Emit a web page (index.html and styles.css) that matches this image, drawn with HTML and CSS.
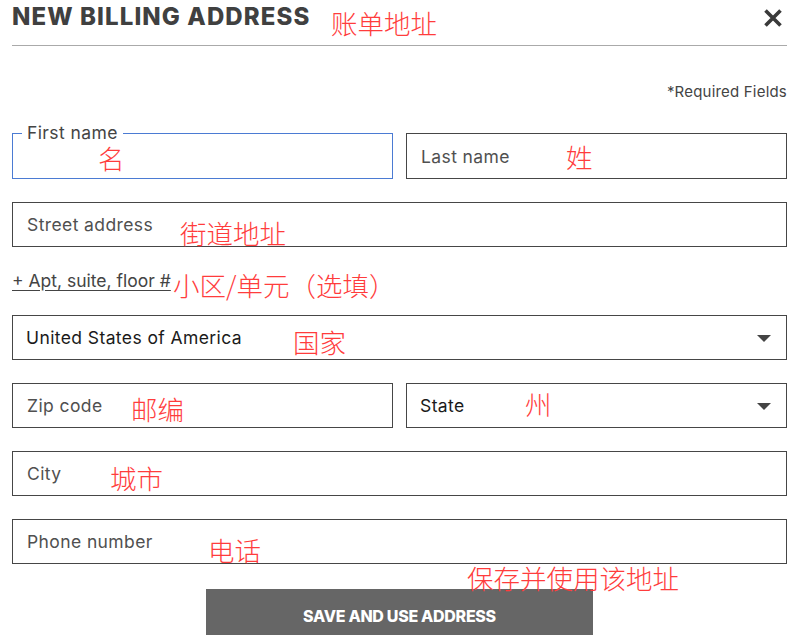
FILE: index.html
```html
<!DOCTYPE html>
<html lang="en">
<head>
    <meta charset="UTF-8">
    <meta name="viewport" content="width=device-width, initial-scale=1.0">
    <title>New Billing Address</title>
    <link rel="stylesheet" href="styles.css">
</head>
<body>
    <div class="page">
        <div class="header">
            <h1>NEW BILLING ADDRESS</h1>
            <button class="close-btn" aria-label="Close">
                <svg width="20" height="20" viewBox="0 0 20 20">
                    <path d="M2.5 2.5 L17.5 17.5 M17.5 2.5 L2.5 17.5" stroke="#3a3a3a" stroke-width="3.6" stroke-linecap="butt"/>
                </svg>
            </button>
        </div>

        <div class="required">*Required Fields</div>

        <form class="address-form">
            <div class="row two first">
                <div class="field active">
                    <span class="float-label">First name</span>
                </div>
                <div class="field"><span class="placeholder">Last name</span></div>
            </div>

            <div class="row">
                <div class="field"><span class="placeholder">Street address</span></div>
            </div>

            <a href="#" class="apt-link">+ Apt, suite, floor #</a>

            <div class="row">
                <div class="field select"><span class="value">United States of America</span><span class="caret"></span></div>
            </div>

            <div class="row two">
                <div class="field"><span class="placeholder">Zip code</span></div>
                <div class="field select"><span class="value">State</span><span class="caret"></span></div>
            </div>

            <div class="row">
                <div class="field"><span class="placeholder">City</span></div>
            </div>

            <div class="row">
                <div class="field"><span class="placeholder">Phone number</span></div>
            </div>

            <div class="actions">
                <button type="button" class="save-btn">SAVE AND USE ADDRESS</button>
            </div>
        </form>

        <!-- red notes drawn over the screenshot -->
        <span class="note" style="left:331px; top:8px;">账单地址</span>
        <span class="note" style="left:98px; top:143px;">名</span>
        <span class="note" style="left:566px; top:142px;">姓</span>
        <span class="note" style="left:180px; top:218px;">街道地址</span>
        <span class="note" style="left:173px; top:270px;">小区/单元（选填）</span>
        <span class="note" style="left:293px; top:327px;">国家</span>
        <span class="note" style="left:131px; top:394px;">邮编</span>
        <span class="note" style="left:525px; top:389px;">州</span>
        <span class="note" style="left:110px; top:463px;">城市</span>
        <span class="note" style="left:208px; top:535px;">电话</span>
        <span class="note" style="left:467px; top:563px;">保存并使用该地址</span>
    </div>
</body>
</html>
```

FILE: styles.css
```css
* {
    margin: 0;
    padding: 0;
    box-sizing: border-box;
}

body {
    background: #fff;
    font-family: "Inter", "Noto Sans", sans-serif;
    color: #444;
    overflow: hidden;
}

.page {
    position: relative;
    width: 789px;
    padding: 0 2px 0 12px;
}

.header {
    height: 46px;
    border-bottom: 1px solid #aaa;
    display: flex;
    justify-content: space-between;
    align-items: flex-start;
    padding-top: 3px;
}

h1 {
    font-size: 24px;
    font-weight: 800;
    letter-spacing: 1.1px;
    color: #404040;
    line-height: 28px;
}

.close-btn {
    background: none;
    border: none;
    margin: 5px 4px 0 0;
    cursor: pointer;
}

.required {
    text-align: right;
    font-size: 15px;
    letter-spacing: 0.2px;
    line-height: 20px;
    padding-top: 36px;
    color: #444;
}

.address-form {
    margin-top: 31px;
    display: flex;
    flex-direction: column;
    gap: 23px;
}

.row {
    display: flex;
    gap: 13px;
}

.field {
    position: relative;
    flex: 1;
    height: 45px;
    border: 1px solid #464646;
    display: flex;
    align-items: center;
    padding: 0 14px;
    font-size: 17.5px;
    letter-spacing: 0.4px;
}

.row.first .field {
    height: 46px;
}

.field.active {
    border-color: #4b7bd3;
}

.float-label {
    position: absolute;
    left: 9px;
    top: -12px;
    background: #fff;
    padding: 0 5px;
    line-height: 22px;
    color: #444;
}

.placeholder {
    color: #505050;
}

.select .value {
    color: #1a1a1a;
    margin-left: -1px;
}

.caret {
    position: absolute;
    right: 15px;
    top: 19px;
    border-left: 7px solid transparent;
    border-right: 7px solid transparent;
    border-top: 7px solid #444;
}

.apt-link {
    font-size: 17.5px;
    line-height: 22px;
    color: #444;
    text-decoration: underline;
    text-underline-offset: 3px;
    align-self: flex-start;
}

.actions {
    display: flex;
    justify-content: center;
    margin-top: 2px;
}

.save-btn {
    width: 387px;
    height: 52px;
    background: #666;
    color: #fff;
    border: none;
    font-family: "Inter", sans-serif;
    font-size: 16px;
    font-weight: 800;
    letter-spacing: -0.3px;
    padding-top: 2px;
}

.note {
    position: absolute;
    font-family: "Noto Sans CJK SC", sans-serif;
    font-weight: 300;
    font-size: 26.5px;
    line-height: 30px;
    color: #ff3c3c;
    white-space: nowrap;
}
```
